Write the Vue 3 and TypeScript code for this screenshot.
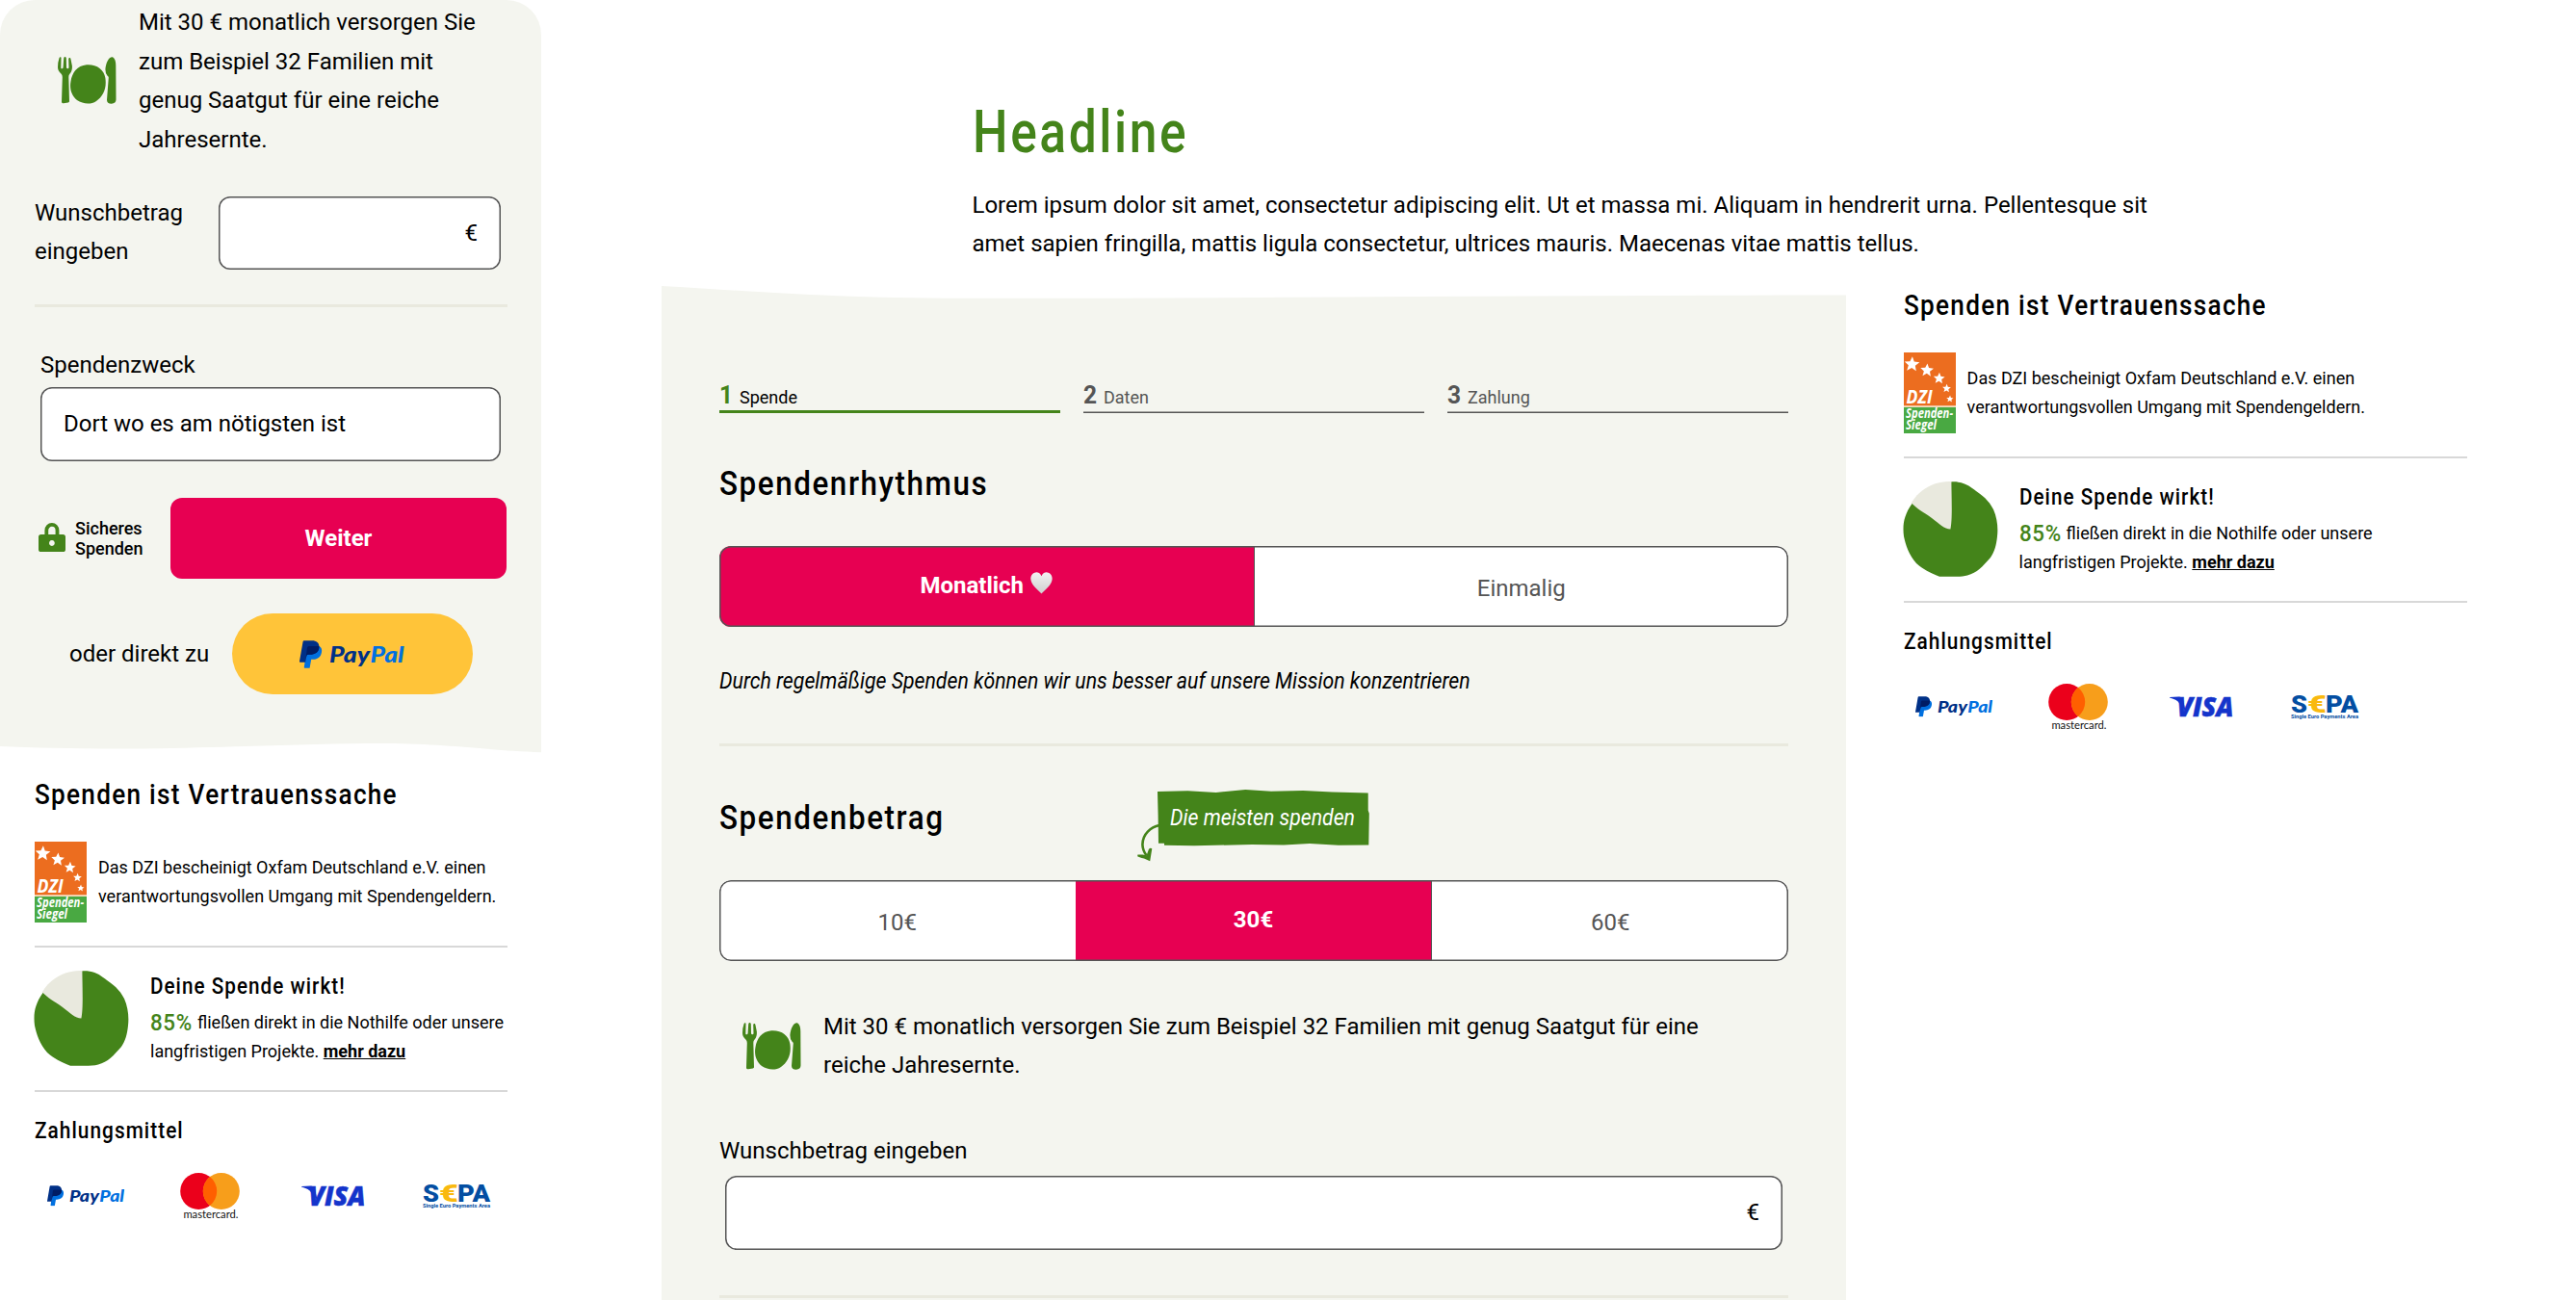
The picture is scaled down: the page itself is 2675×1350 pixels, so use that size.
<script setup lang="ts">
type View = 'mobile' | 'desktop'
const views: View[] = ['mobile', 'desktop']

const steps = [
  { no: 1, label: 'Spende', active: true },
  { no: 2, label: 'Daten', active: false },
  { no: 3, label: 'Zahlung', active: false },
]
const amounts = [10, 30, 60]
const selectedAmount = 30

// Centre and radius of each star on the seal
const stars = [
  { x: 8.4, y: 12.4, r: 8.2 },
  { x: 24, y: 18.6, r: 7.2 },
  { x: 36.6, y: 27, r: 6.2 },
  { x: 44.4, y: 37.4, r: 4.6 },
  { x: 47.8, y: 48.4, r: 3.8 },
]
function starPoints(x: number, y: number, r: number): string {
  return Array.from({ length: 10 }, (_, i) => {
    const a = (Math.PI / 5) * i - Math.PI / 2 + 0.06
    const d = i % 2 ? r * 0.45 : r
    return `${(x + Math.cos(a) * d).toFixed(2)},${(y + Math.sin(a) * d).toFixed(2)}`
  }).join(' ')
}
</script>

<template>
  <div class="page">
    <svg class="defs" aria-hidden="true">
      <symbol id="meal" viewBox="0 0 61 49">
        <path d="M30 8.3C40 7.6 48 13 49.4 22C51 33 47 41 40 46C34 50 26 49 20 45C14 40 12.2 33 13.4 26C15 16 20 9.5 30 8.3Z" />
        <path d="M2.6 .2C3.4 .1 3.6 .8 3.5 1.6L3.3 11.4Q3.6 12.6 4.6 12.3Q5.6 12 5.6 11L6.2 1.4Q6.6 0 7.6 0Q8.8 .2 8.8 1.6L9 11.2Q9.4 12.4 10.4 12.3Q11.4 12.2 11.5 11L11.2 2Q11.6 .7 12.7 1Q13.4 1.4 13.7 3.4L14.9 9.6Q15.2 14.6 12.6 17.6Q11.2 19 11.3 21L12 46.2Q12 47.3 10.8 47.5L6 48.3Q4 48.5 4 46.8L4.8 21Q4.8 18.6 3.4 17.4Q.2 15 0 11Q.1 5 1.6 1Q2 .2 2.6 .2Z" />
        <path d="M57 .2C59.6 1.6 60.3 5 60.3 9L60.5 44.6Q60.4 48.6 55.8 48.8Q51 48.6 51 44.8L52.8 21.4Q52.8 20.4 51.6 19.8Q49.4 17.6 49.4 13C50 6 53 -.4 57 .2Z" />
      </symbol>
      <symbol id="paypal" viewBox="0 0 109 29">
        <path fill="#0070e0" d="M20.3 6C22.8 7.2 23.6 9.5 23 12.2C22.2 17.5 18.5 19.8 13.5 19.8H12.2L10.6 28.7H5.6Q4.6 28.7 4.8 27.8L7.8 8Q8.1 6 10 6Z" />
        <path fill="#003087" d="M4.8 .3H13C18 .3 20.8 3 20.4 7.5C19.8 12.5 15.8 14.8 10.5 14.8H9Q7.6 14.8 7.3 16.2L6.1 22.7H.7Q-.2 22.7 0 21.8L3.6 1.3Q3.8 .3 4.8 .3Z" />
        <path fill="#001c64" d="M10 6H20.3C20.8 12 16.5 14.8 10.5 14.8H9Q7.6 14.8 7.3 16.2L6.4 20.6L7.9 8Q8.1 6 10 6Z" />
        <text y="22.6" class="pp-word"><tspan x="31" textLength="42" lengthAdjust="spacingAndGlyphs" fill="#003087">Pay</tspan><tspan x="73.5" textLength="35" lengthAdjust="spacingAndGlyphs" fill="#0070e0">Pal</tspan></text>
      </symbol>
    </svg>

    <section v-for="view in views" :key="view" class="view" :class="view">
      <header v-if="view === 'desktop'" class="intro">
        <h1><span class="narrow">Headline</span></h1>
        <p>
          Lorem ipsum dolor sit amet, consectetur adipiscing elit. Ut et massa mi. Aliquam in hendrerit urna. Pellentesque sit<br />
          amet sapien fringilla, mattis ligula consectetur, ultrices mauris. Maecenas vitae mattis tellus.
        </p>
      </header>

      <div class="content">
        <div v-if="view === 'mobile'" class="card">
          <div class="hint">
            <svg class="meal"><use href="#meal" /></svg>
            <p>Mit 30 € monatlich versorgen Sie<br />zum Beispiel 32 Familien mit<br />genug Saatgut für eine reiche<br />Jahresernte.</p>
          </div>
          <div class="custom">
            <label>Wunschbetrag<br />eingeben</label>
            <div class="field euro">€</div>
          </div>
          <div class="rule"></div>
          <div class="purpose">
            <label>Spendenzweck</label>
            <div class="field">Dort wo es am nötigsten ist</div>
          </div>
          <div class="submit">
            <svg class="lock" viewBox="0 0 28 30">
              <path fill="none" stroke="#44841a" stroke-width="3.8" d="M8.3 13V7.8a5.6 5.9 0 0 1 11.2 0V13" />
              <path fill="#44841a" fill-rule="evenodd" d="M2.6 12H25.4Q28 12 28 14.6V27.4Q28 30 25.4 30H2.6Q0 30 0 27.4V14.6Q0 12 2.6 12ZM13.9 18.1a2.9 2.9 0 1 0 .01 0Z" />
            </svg>
            <span class="secure">Sicheres<br />Spenden</span>
            <button class="next">Weiter</button>
          </div>
          <div class="direct">
            <span>oder direkt zu</span>
            <button class="paypal-btn" aria-label="PayPal"><svg><use href="#paypal" /></svg></button>
          </div>
          <svg class="wave-bottom" viewBox="0 0 562 12" preserveAspectRatio="none">
            <path d="M0 0H562V11.2C500 9 470 2.5 400 2C320 2 250 6 150 7.4C90 8 40 6.6 0 5Z" />
          </svg>
        </div>

        <div v-else class="card">
          <svg class="wave-top" viewBox="0 0 1230 14" preserveAspectRatio="none">
            <path d="M0 0C90 5 180 13 320 12.8C600 13 900 9.6 1230 9.4V14H0Z" />
          </svg>
          <div class="form">
            <ol class="steps">
              <li v-for="s in steps" :key="s.no" :class="{ active: s.active }">
                <b><span class="narrow">{{ s.no }}</span></b>{{ s.label }}
              </li>
            </ol>
            <h2 class="rhythm"><span class="narrow">Spendenrhythmus</span></h2>
            <div class="segments">
              <button class="on">
                Monatlich
                <svg class="heart" viewBox="0 0 23 23">
                  <defs>
                    <linearGradient id="silver" x1="0" y1="0" x2="0" y2="1">
                      <stop offset="0" stop-color="#f2f2f2" />
                      <stop offset="1" stop-color="#cfcfcf" />
                    </linearGradient>
                  </defs>
                  <path fill="url(#silver)" d="M11.5 4.2C13 1 15.4.2 17.4.4C21 .8 23 4 22.6 7.8C22 13.4 16 18 11.5 22.6C7 18 1 13.4.4 7.8C0 4 2 .8 5.6.4C7.6.2 10 1 11.5 4.2Z" />
                </svg>
              </button>
              <button>Einmalig</button>
            </div>
            <p class="note"><span class="narrow">Durch regelmäßige Spenden können wir uns besser auf unsere Mission konzentrieren</span></p>
            <div class="rule"></div>
            <div class="amount-head">
              <h2><span class="narrow">Spendenbetrag</span></h2>
              <div class="badge">
                <svg class="badge-bg" viewBox="0 0 220 59">
                  <path d="M0 2L31.3 1.3L60.7 3L91.3 0L118 1.7L151.3 1L181.3 2.4L218.7 3.4V21.4L219.8 24.7L219.3 57.4L188 57.7L158 56L131 57.4L98 57L38 58.3L7 57.7V55.7H1L.6 26Z" />
                </svg>
                <svg class="badge-arrow" viewBox="0 0 23 40">
                  <path fill="none" stroke="#44841a" stroke-width="2.6" d="M23 2C14 4 5.5 11 5.4 22C5.5 26 7 30 9.6 33.6" />
                  <path d="M.4 32.4L5.6 32.6L9.6 33.2L11.8 27.2Q13.2 25 15.3 26.2L13.2 39.3L7 36.6Q1.6 35 .2 34.2Z" />
                </svg>
                <span class="narrow">Die meisten spenden</span>
              </div>
            </div>
            <div class="segments">
              <button v-for="a in amounts" :key="a" :class="{ on: a === selectedAmount }">{{ a }}€</button>
            </div>
            <div class="hint">
              <svg class="meal"><use href="#meal" /></svg>
              <p>Mit 30 € monatlich versorgen Sie zum Beispiel 32 Familien mit genug Saatgut für eine<br />reiche Jahresernte.</p>
            </div>
            <label class="wish">Wunschbetrag eingeben</label>
            <div class="field euro">€</div>
            <div class="rule end"></div>
          </div>
        </div>

        <aside class="trust">
          <h3><span class="narrow">Spenden ist Vertrauenssache</span></h3>
          <div class="seal-row">
            <svg class="seal" viewBox="0 0 54 84">
              <rect width="54" height="84" fill="#ec6d1f" />
              <rect y="55.2" width="54" height="2" fill="#f6dcc0" />
              <rect y="57" width="54" height="27" fill="#49a942" />
              <polygon v-for="s in stars" :key="s.x" fill="#fff" :points="starPoints(s.x, s.y, s.r)" />
              <text x="2.6" y="52.6" class="dzi" textLength="27" lengthAdjust="spacingAndGlyphs">DZI</text>
              <text x="2" y="67.6" class="siegel" textLength="49" lengthAdjust="spacingAndGlyphs">Spenden-</text>
              <text x="2" y="80.4" class="siegel" textLength="32" lengthAdjust="spacingAndGlyphs">Siegel</text>
            </svg>
            <p>Das DZI bescheinigt Oxfam Deutschland e.V. einen<br />verantwortungsvollen Umgang mit Spendengeldern.</p>
          </div>
          <div class="line"></div>
          <div class="impact">
            <svg class="pie" viewBox="0 0 99 99">
              <path fill="#e9e9de" d="M51 0C34 -1 18 7 8.6 22.4L10 26L48 52L51 48Z" />
              <path fill="#44841a" d="M50.4.4C60 0 66 2.5 72 7C82 14 89 19 94 29C98 38 99 48 98 57C97 67 95 73 91 79C83 88 77 95 67 97.5C60 99.5 50 98.7 38 98.7C28 95 21 91 14 85C6 76 3 66 1 57C-.5 45 1 35 9.5 23C18 31 25 34 30 38C38 44 43 49.5 49.4 49.6C51.5 40 50.6 20 50.4.4Z" />
            </svg>
            <div>
              <h4><span class="narrow">Deine Spende wirkt!</span></h4>
              <p><b class="pct"><span class="narrow">85%</span></b>fließen direkt in die Nothilfe oder unsere<br />langfristigen Projekte. <a>mehr dazu</a></p>
            </div>
          </div>
          <div class="line"></div>
          <h5><span class="narrow">Zahlungsmittel</span></h5>
          <div class="methods">
            <svg class="m-paypal"><use href="#paypal" /></svg>
            <svg class="m-master" viewBox="0 0 62 50">
              <circle cx="19.2" cy="19" r="19" fill="#eb001b" />
              <circle cx="42.8" cy="19" r="19" fill="#f79e1b" />
              <path fill="#ff5f00" d="M31 4.1A19 19 0 0 1 31 33.9A19 19 0 0 1 31 4.1Z" />
              <text x="3.4" y="47.4" textLength="57" lengthAdjust="spacingAndGlyphs">mastercard.</text>
            </svg>
            <svg class="m-visa" viewBox="0 0 66 22">
              <path d="M0 .9L9 .4Q13.2.5 14 3.6L16.5 15L10.5 8Q8 3.6 0 1.6Z" />
              <text x="7.5" y="21.2" textLength="59" lengthAdjust="spacingAndGlyphs">VISA</text>
            </svg>
            <svg class="m-sepa" viewBox="0 0 71 26">
              <text y="19.2" class="big"><tspan x="0" textLength="17" lengthAdjust="spacingAndGlyphs">S</tspan><tspan x="36" textLength="34" lengthAdjust="spacingAndGlyphs">PA</tspan></text>
              <text x="17" y="19.2" class="big eur" textLength="20" lengthAdjust="spacingAndGlyphs">€</text>
              <text x="0" y="25" class="tiny" textLength="70" lengthAdjust="spacingAndGlyphs">Single Euro Payments Area</text>
            </svg>
          </div>
        </aside>
      </div>
    </section>
  </div>
</template>

<style>
body {
  background: #fff;
}
</style>

<style scoped>
.page {
  display: flex;
  width: 2675px;
  height: 1350px;
  overflow: hidden;
  font: 400 24px/40.5px Roboto, 'Liberation Sans', sans-serif;
  color: #000;
}
.page * {
  box-sizing: border-box;
}
h1, h2, h3, h4, h5, p, ol {
  margin: 0;
  padding: 0;
  font-weight: 500;
}
p {
  font-weight: 400;
  white-space: nowrap;
}
svg {
  display: block;
  flex: none;
  overflow: visible;
}
.defs {
  width: 0;
  height: 0;
}
button {
  border: 0;
  padding: 0;
  font: inherit;
}
/* Condensed display lettering, --sx sets how narrow */
.narrow {
  display: inline-block;
  transform: scaleX(var(--sx, 0.88));
  transform-origin: left;
  white-space: nowrap;
  letter-spacing: 0.05em;
}
h1 { --sx: 0.852; }
h2 { --sx: 0.91; }
h3 { --sx: 0.9; }
h4 { --sx: 0.879; }
h5 { --sx: 0.886; }

/* Views */
.mobile {
  width: 562px;
}
.desktop {
  margin-left: 125px;
}
.mobile .content {
  display: flex;
  flex-direction: column;
}
.desktop .content {
  display: flex;
  align-items: flex-start;
}
.mobile .card {
  height: 782px;
  display: flex;
  flex-direction: column;
  background: linear-gradient(#f4f5ef, #f4f5ef) 0 0 / 100% 770px no-repeat;
  border-radius: 36px 36px 0 0;
  padding-top: 3px;
}
.desktop .card {
  width: 1230px;
}
.intro {
  height: 297px;
  padding: 96.5px 0 0 322.5px;
}
.intro h1 {
  font-size: 60.5px;
  line-height: 82px;
  color: #44841a;
}
.intro p {
  margin-top: 14.2px;
}
.form {
  height: 1042px;
  padding: 79px 60px 0;
  background: #f4f5ef;
}
.wave-top {
  width: 1230px;
  height: 14px;
  fill: #f4f5ef;
}
.wave-bottom {
  width: 562px;
  height: 12px;
  margin-top: 49px;
  fill: #f4f5ef;
}

/* Shared form parts */
.meal {
  width: 61px;
  height: 49px;
  fill: #44841a;
}
.hint {
  display: flex;
}
.mobile .hint {
  padding-left: 60px;
  gap: 23px;
}
.mobile .meal {
  margin-top: 56px;
}
.field {
  height: 76.5px;
  border-radius: 12px;
  background: #fff;
  box-shadow: inset 0 0 0 1.5px #555;
  padding: 0 24px;
  line-height: 76.5px;
}
.euro {
  text-align: right;
}
.rule {
  height: 3px;
  background: #e9e9de;
}
.mobile .rule {
  width: 490.5px;
  margin: 34.5px 0 0 36px;
}
.custom {
  display: flex;
  margin: 35.5px 42px 0 36px;
  height: 81px;
}
.custom label {
  width: 190.5px;
}
.custom .field {
  flex: 1;
  margin-top: 3px;
}
.purpose {
  margin: 39.5px 42px 0;
}
.purpose label {
  display: block;
  height: 43.5px;
}
.submit {
  display: flex;
  height: 84px;
  margin: 38.5px 36px 0 40px;
}
.lock {
  width: 28px;
  height: 30px;
  margin-top: 26px;
}
.secure {
  width: 99px;
  margin: 21px 0 0 10px;
  font-size: 18px;
  font-weight: 500;
  line-height: 21px;
}
.next {
  flex: 1;
  border-radius: 12px;
  background: #e70052;
  color: #fff;
  font-weight: 700;
}
.direct {
  display: flex;
  align-items: center;
  margin: 36px 0 0 72px;
}
.direct span {
  width: 169px;
}
.paypal-btn {
  display: flex;
  width: 249.5px;
  height: 84px;
  border-radius: 42px;
  background: #ffc439;
  align-items: center;
  justify-content: center;
}
.paypal-btn svg {
  width: 109px;
  height: 29px;
}
.pp-word {
  font: italic 900 22px Lato, sans-serif;
}

/* Desktop form */
.steps {
  display: flex;
  gap: 24px;
  list-style: none;
}
.steps li {
  width: 354px;
  height: 39px;
  font-size: 18px;
  font-weight: 400;
  line-height: 43px;
  color: #555;
  box-shadow: inset 0 -1.5px #555;
}
.steps li b {
  --sx: 0.98;
  display: inline-block;
  width: 21px;
  font-size: 25px;
  line-height: 41px;
}
.steps .active {
  color: #000;
  box-shadow: inset 0 -3px #44841a;
}
.steps .active b {
  color: #44841a;
}
.form h2 {
  font-size: 34.5px;
  line-height: 42px;
}
.rhythm {
  margin-top: 52px;
  height: 86px;
}
.segments {
  display: flex;
  height: 84px;
  border-radius: 12px;
  overflow: hidden;
  position: relative;
  background: #fff;
}
.segments::after {
  content: '';
  position: absolute;
  inset: 0;
  border-radius: 12px;
  box-shadow: inset 0 0 0 1.5px #555;
}
.segments button {
  flex: 1;
  display: flex;
  justify-content: center;
  background: #fff;
  color: #555;
  line-height: 88px;
}
.segments .on {
  background: #e70052;
  color: #fff;
  font-weight: 700;
  line-height: 82.5px;
  border-right: 1px solid #555;
}
.heart {
  width: 23px;
  height: 23px;
  margin: 27px 0 0 7px;
}
.note {
  margin-top: 36px;
  font-style: italic;
}
.note .narrow,
.badge .narrow {
  letter-spacing: 0;
}
.note {
  --sx: 0.886;
}
.note + .rule {
  margin-top: 44.5px;
}
.amount-head {
  display: flex;
  height: 138.5px;
  padding-top: 45px;
}
.amount-head h2 {
  width: 455px;
  margin-top: 8px;
}
.badge {
  --sx: 0.885;
  position: relative;
  width: 220px;
  height: 59px;
  padding-left: 13px;
  line-height: 59px;
  font-style: italic;
  color: #fff;
}
.badge .narrow {
  position: relative;
}
.badge-bg {
  position: absolute;
  inset: 0;
  width: 220px;
  height: 59px;
  fill: #44841a;
}
.badge-arrow {
  position: absolute;
  left: -21px;
  top: 35px;
  width: 23px;
  height: 40px;
  fill: #44841a;
}
.form .hint {
  gap: 23px;
  margin: 48px 0 0 24px;
}
.form .meal {
  margin-top: 16px;
}
.wish {
  display: block;
  margin-top: 48.5px;
}
.form .field {
  margin: 5.5px 6px 0;
}
.end {
  margin-top: 47.5px;
}

/* Trust column */
.trust {
  width: 490.5px;
  margin: 23px 0 0 36px;
  font-size: 18px;
  line-height: 30px;
}
.desktop .trust {
  width: 585px;
  margin: 0 0 0 59.6px;
}
.trust h3 {
  font-size: 29px;
  line-height: 40px;
}
.seal-row {
  display: flex;
  gap: 12px;
  height: 108px;
  margin-top: 29px;
}
.seal {
  width: 54px;
  height: 84px;
}
.seal-row p {
  margin-top: 12px;
}
.seal text {
  fill: #fff;
  font-style: italic;
  font-family: 'Open Sans', sans-serif;
  font-weight: 700;
}
.dzi {
  font-size: 20px;
}
.siegel {
  font-size: 13.5px;
}
.line {
  height: 2px;
  background: #d8d8d8;
}
.impact {
  display: flex;
  height: 148px;
  padding-top: 24px;
}
.pie {
  width: 99px;
  height: 99px;
  margin-left: -1px;
}
.impact > div {
  margin: -1.5px 0 0 22px;
}
.trust h4,
.trust h5 {
  font-size: 23.5px;
  line-height: 34px;
}
.impact p {
  margin-top: 6px;
}
.pct {
  --sx: 0.93;
  display: inline-block;
  width: 49px;
  height: 30px;
  color: #44841a;
  font-size: 24px;
  font-weight: 500;
  vertical-align: bottom;
}
.pct .narrow {
  letter-spacing: 0.03em;
}
.impact a {
  font-weight: 700;
  text-decoration: underline;
}
.trust h5 {
  margin-top: 23px;
}
.methods {
  display: flex;
  margin: 27px 0 0 12.5px;
}
.m-paypal {
  width: 80.5px;
  height: 21.5px;
  margin: 13px 57.5px 0 0;
}
.m-master {
  width: 62px;
  height: 50px;
  margin-right: 65px;
}
.m-master text {
  font: 400 11px Lato, sans-serif;
  fill: #111;
}
.m-visa {
  width: 66px;
  height: 22px;
  margin: 13px 60px 0 -1px;
  fill: #1434cb;
}
.m-visa text {
  font: italic 800 28.5px 'Open Sans', sans-serif;
  stroke: #1434cb;
  stroke-width: 0.5px;
}
.m-sepa {
  width: 71px;
  height: 26px;
  margin-top: 11px;
  fill: #034ea2;
}
.big {
  font: 900 26.5px Roboto, sans-serif;
}
.eur {
  fill: #f9b90f;
}
.tiny {
  font: 700 5.5px Roboto, sans-serif;
}
</style>
